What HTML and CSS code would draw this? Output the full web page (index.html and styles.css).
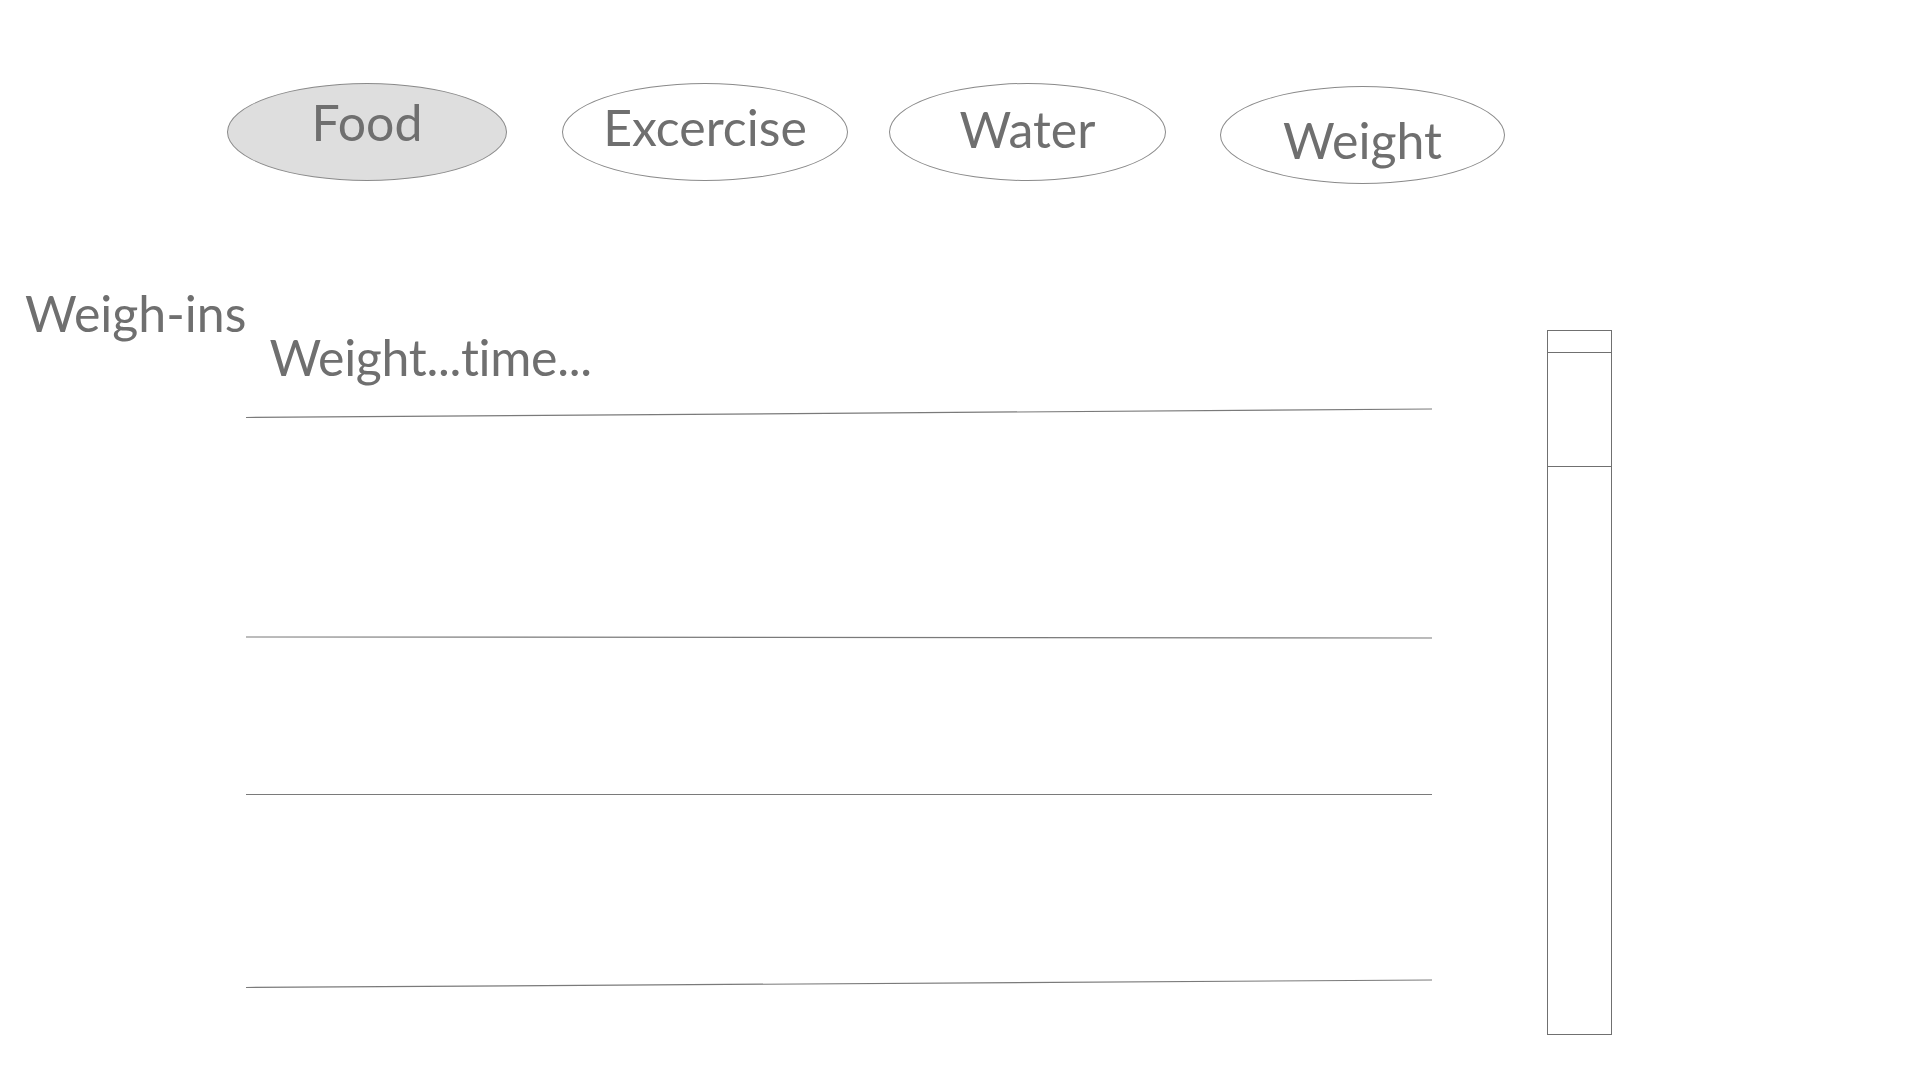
FILE: index.html
```html
<!DOCTYPE html>
<html lang="en">
<head>
<meta charset="utf-8">
<title>Weigh-ins</title>
<link rel="stylesheet" href="styles.css">
</head>
<body>
<div class="app">
  <nav class="tabs">
    <a class="tab tab-food is-active"><span class="tab-label">Food</span></a>
    <a class="tab tab-exercise"><span class="tab-label">Excercise</span></a>
    <a class="tab tab-water"><span class="tab-label">Water</span></a>
    <a class="tab tab-weight"><span class="tab-label">Weight</span></a>
  </nav>

  <section class="weighins">
    <h2 class="section-title">Weigh-ins</h2>

    <div class="log">
      <div class="log-head">Weight...time...</div>
      <svg class="rule rule-first" width="1186" height="12" viewBox="0 0 1186 12"><line x1="0" y1="11.5" x2="1186" y2="3" /></svg>
      <div class="entry entry-a"></div>
      <svg class="rule" width="1186" height="12" viewBox="0 0 1186 12"><line x1="0" y1="6" x2="1186" y2="7" /></svg>
      <div class="entry entry-b"></div>
      <svg class="rule" width="1186" height="12" viewBox="0 0 1186 12"><line x1="0" y1="6.5" x2="1186" y2="6.5" /></svg>
      <div class="entry entry-c"></div>
      <svg class="rule" width="1186" height="12" viewBox="0 0 1186 12"><line x1="0" y1="10.5" x2="1186" y2="3" /></svg>
    </div>

    <div class="scrollbar">
      <div class="scroll-btn"></div>
      <div class="scroll-thumb"></div>
      <div class="scroll-track"></div>
    </div>
  </section>
</div>
</body>
</html>
```

FILE: styles.css
```css
html, body {
  margin: 0;
  padding: 0;
  background: #ffffff;
}

body {
  width: 1920px;
  height: 1080px;
  overflow: hidden;
  font-family: "Lato", "Open Sans", sans-serif;
  font-variant-ligatures: none;
  color: #6f6f6f;
}

.tabs {
  display: flex;
  align-items: flex-start;
  padding: 83px 0 0 227px;
}

.tab {
  box-sizing: border-box;
  height: 98px;
  border: 1px solid #8a8a8a;
  border-radius: 50%;
  display: flex;
  justify-content: center;
  align-items: flex-start;
  background: #ffffff;
}

.tab-label {
  display: block;
  font-size: 50px;
  line-height: 50px;
  color: #6f6f6f;
  white-space: nowrap;
}

.tab.is-active {
  background: #dedede;
}

.tab-food {
  width: 280px;
  padding-top: 13px;
}

.tab-exercise {
  width: 286px;
  margin-left: 55px;
  padding-top: 18px;
}

.tab-water {
  width: 277px;
  margin-left: 41px;
  padding-top: 20px;
}

.tab-weight {
  width: 285px;
  margin-left: 54px;
  margin-top: 3px;
  padding-top: 28px;
}

.weighins {
  display: flex;
  align-items: flex-start;
  margin-top: 103.5px;
}

.section-title {
  flex: 0 0 246px;
  box-sizing: border-box;
  margin: 0;
  padding-left: 25px;
  font-size: 50px;
  line-height: 50px;
  font-weight: normal;
  white-space: nowrap;
}

.log {
  flex: 0 0 1186px;
  display: flex;
  flex-direction: column;
  padding-top: 44px;
}

.log-head {
  padding-left: 23px;
  font-size: 50px;
  line-height: 50px;
  letter-spacing: -0.3px;
  white-space: nowrap;
}

.rule {
  display: block;
  overflow: visible;
}

.rule line {
  stroke: #7a7a7a;
  stroke-width: 1.2;
}

.rule-first {
  margin-top: 24px;
}

.entry-a { height: 213px; }
.entry-b { height: 145px; }
.entry-c { height: 177px; }

.scrollbar {
  box-sizing: border-box;
  width: 65px;
  height: 705px;
  margin-left: 115px;
  margin-top: 42px;
  border: 1px solid #707070;
  display: flex;
  flex-direction: column;
}

.scroll-btn {
  height: 21px;
  border-bottom: 1px solid #707070;
}

.scroll-thumb {
  height: 113px;
  border-bottom: 1px solid #707070;
}

.scroll-track {
  flex: 1;
}
```
